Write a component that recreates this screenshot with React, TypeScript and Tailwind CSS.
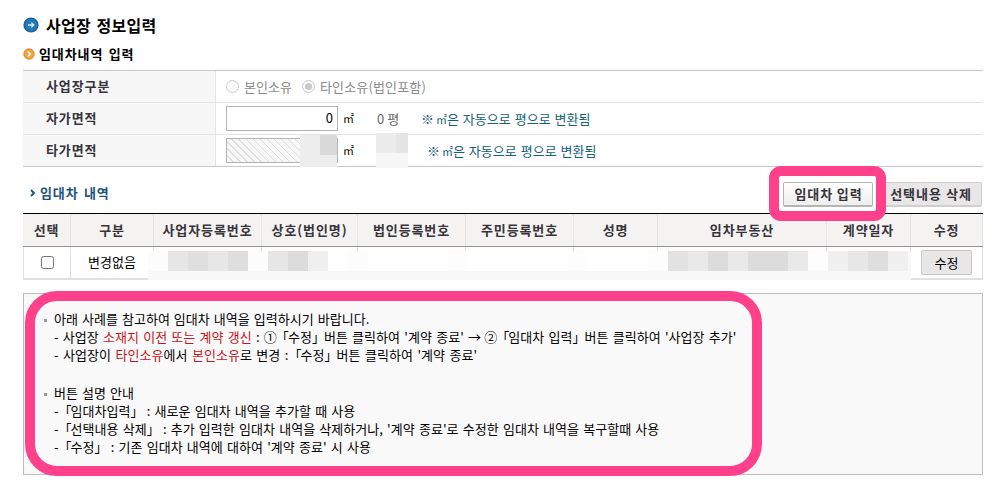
import type { ReactNode } from 'react';

interface Column {
  label: string;
  width: string;
}

const columns: Column[] = [
  { label: '선택', width: 'w-[48px]' },
  { label: '구분', width: 'w-[83px]' },
  { label: '사업자등록번호', width: 'w-[108px]' },
  { label: '상호(법인명)', width: 'w-[96px]' },
  { label: '법인등록번호', width: 'w-[108px]' },
  { label: '주민등록번호', width: 'w-[108px]' },
  { label: '성명', width: 'w-[84px]' },
  { label: '임차부동산', width: 'w-[169px]' },
  { label: '계약일자', width: 'w-[84px]' },
  { label: '수정', width: 'w-[72px]' },
];

// masked values in the list row, one entry per 20px block
const maskBlocks = [
  '#fcfcfc', '#e6e6e6', '#dfdfdf', '#e7e7e7', '#dedede', '#fcfcfc', '#e6e6e6', '#dcdcdc', '#efefef', '#fefefe',
  '#fcfcfc', '#ffffff', '#ffffff', '#ffffff', '#ffffff', '#fdfdfd', '#ffffff', '#ffffff', '#ffffff', '#ffffff',
  '#ffffff', '#fdfdfd', '#ffffff', '#ffffff', '#ffffff', '#fdfdfd', '#e2e2e2', '#e9e9e9', '#dcdcdc', '#e9e9e9',
  '#dcdcdc', '#dcdcdc', '#e9e9e9', '#fdfdfd', '#f0f0f0', '#e7e7e7', '#dedede', '#f0f0f0',
];

const Radio = ({ checked }: { checked?: boolean }) => (
  <span className="flex h-[13px] w-[13px] items-center justify-center rounded-full border border-[#cbcbcb] bg-[#fafafa]">
    {checked && <span className="h-[7px] w-[7px] rounded-full bg-[#c9c9c9]" />}
  </span>
);

const FormRow = ({ label, children }: { label: string; children: ReactNode }) => (
  <div className="flex h-8 border-b border-[#e4e4e4] last:border-[#c8c8c8]">
    <div className="w-[193px] border-r border-[#e4e4e4] bg-[#f7f7f7] pl-[23px] font-bold leading-[30px] tracking-[0.9px] text-[#38333b]">
      {label}
    </div>
    <div className="relative flex flex-1 items-center pl-[10px]">{children}</div>
  </div>
);

const AreaHint = () => (
  <span className="text-[#15607a] [word-spacing:0.9px]">
    <span className="tracking-[-2px]">※</span> <span className="text-[11px]">㎡</span>은 자동으로 평으로 변환됨
  </span>
);

const Line = ({ bullet, children }: { bullet?: boolean; children: ReactNode }) => (
  <p className={bullet ? 'flex h-[18px] items-center [word-spacing:1px]' : 'h-[18px] whitespace-nowrap pl-[10px]'}>
    {bullet && <span className="mr-[7px] mt-[2px] h-[3px] w-[3px] bg-[#999]" />}
    {children}
  </p>
);

const Red = ({ children }: { children: ReactNode }) => <span className="text-[#c4161c]">{children}</span>;

const Tight = ({ children }: { children: string }) => <span className="tracking-[-1px]">{children}</span>;

// full-width brackets set a little tighter than the em box
const Q = ({ children }: { children: string }) => (
  <>
    <Tight>「</Tight>
    {children}
    <Tight>」</Tight>
  </>
);

export default function App() {
  return (
    <main className="relative h-[491px] w-[1001px] overflow-hidden bg-white pl-[23px] pt-[14px] font-['Noto_Sans_CJK_KR',sans-serif] text-[13px] tracking-[0.04px] text-black [word-spacing:1.5px]">
      <h1 className="flex h-[22px] items-center text-[16px] font-bold leading-[22px] tracking-[0.3px]">
        <svg className="mr-[7px]" width="16" height="16" viewBox="0 0 16 16">
          <circle cx="8" cy="8" r="7.6" fill="#1b5f96" />
          <circle cx="8" cy="8" r="6.2" fill="#2478b4" />
          <path d="M5 8h5.5M8.3 5.6 10.8 8l-2.5 2.4" fill="none" stroke="#d9efff" strokeWidth="1.3" />
        </svg>
        사업장 정보입력
      </h1>
      <h2 className="mt-2 flex h-5 items-center font-bold leading-5 tracking-[0.9px]">
        <svg className="mb-px mr-1" width="12" height="12" viewBox="0 0 12 12">
          <circle cx="6" cy="6" r="5.7" fill="#e08f2b" />
          <circle cx="6" cy="6" r="4.6" fill="#eda547" />
          <path d="M4.8 3.5 7.3 6 4.8 8.5" fill="none" stroke="#fff6dc" strokeWidth="1.6" />
        </svg>
        임대차내역 입력
      </h2>

      <section className="mt-[6px] w-[960px] border-t border-[#c8c8c8]">
        <FormRow label="사업장구분">
          <div className="flex items-center text-[#8a8a8a]">
            <Radio />
            <span className="ml-[5px] w-[58px] leading-[30px]">본인소유</span>
            <Radio checked />
            <span className="ml-[5px] leading-[30px] tracking-[0.15px]">타인소유(법인포함)</span>
          </div>
        </FormRow>
        <FormRow label="자가면적">
          <div className="h-[25px] w-[112px] border border-[#b4b4b4] bg-white pr-1 text-right leading-[22px]">0</div>
          <span className="ml-[5px] w-[34px] text-[11px]">㎡</span>
          <span className="w-[44px] text-[#666] [word-spacing:0px]">0 평</span>
          <AreaHint />
        </FormRow>
        <FormRow label="타가면적">
          <div className="h-[25px] w-[112px] border border-[#b4b4b4] bg-[repeating-linear-gradient(45deg,#f7f7f7_0px,#f7f7f7_4px,#dedede_4px,#dedede_5px)]" />
          <span className="ml-[5px] w-[84px] text-[11px]">㎡</span>
          <AreaHint />
          <div className="absolute left-[84px] top-0 flex h-8 w-[37px] justify-end bg-[#ededed]">
            <div className="h-5 w-[17px] bg-[#d9d9d9]" />
          </div>
          <div className="absolute -top-[2px] left-[160px] h-[35px] w-8 bg-[#f6f6f6]">
            <div className="flex h-5 bg-[#ececec]">
              <div className="ml-5 w-3 bg-[#e5e5e5]" />
            </div>
          </div>
        </FormRow>
      </section>

      <div className="flex h-[46px] w-[959px] items-start justify-between pt-[15px]">
        <h3 className="flex items-center pl-[7px] font-bold leading-[22px] tracking-[0.9px] text-[#1d547f]">
          <svg className="mr-1" width="6" height="8" viewBox="0 0 6 8">
            <path d="M1 1l3 3-3 3" fill="none" stroke="#1d547f" strokeWidth="2" />
          </svg>
          임대차 내역
        </h3>
        <div className="flex font-bold leading-[22px] tracking-[0.9px] text-[#38333b]">
          <div className="relative mr-[5px]">
            <button className="h-[25px] w-[90px] rounded-[2px] border border-b-2 border-[#b5b5b5] bg-linear-to-b from-white to-[#eeeeee] pl-px">
              임대차 입력
            </button>
            <div className="absolute -left-[14px] -top-4 z-10 h-[55px] w-[117px] rounded-[12px] border-[10px] border-[#ff418c]" />
          </div>
          <button className="h-[25px] w-[104px] whitespace-nowrap rounded-[2px] border border-b-2 border-[#cfcfcf] bg-[#e8e6e7] pl-[2px] leading-[20px] tracking-[1px]">
            선택내용 삭제
          </button>
        </div>
      </div>

      <section className="relative w-[960px]">
        <div className="flex h-[34px] border-b border-t border-b-[#949494] border-t-black bg-[#f4f3f2] font-bold leading-[32px] tracking-[0.9px] text-[#38333b]">
          {columns.map((c) => (
            <div key={c.label} className={`${c.width} shrink-0 whitespace-nowrap border-r border-[#e4e4e4] text-center`}>
              {c.label}
            </div>
          ))}
        </div>
        <div className="flex h-[33px] border-b-2 border-l border-[#e0e0e0] leading-[30px]">
          <div className="flex w-[47px] items-center justify-center border-r border-[#e0e0e0]">
            <span className="h-[13px] w-[13px] rounded-[2.5px] border border-[#767676] bg-white" />
          </div>
          <div className="w-[83px] border-r border-[#e0e0e0] text-center">변경없음</div>
          <div className="flex flex-1">
            {columns.slice(2, 9).map((c) => (
              <div key={c.label} className={`${c.width} h-1 shrink-0 border-r border-[#e0e0e0]`} />
            ))}
          </div>
          <div className="flex w-[72px] items-center justify-center border-r border-[#e0e0e0]">
            <button className="h-[25px] w-[51px] rounded-[2px] border border-[#c8c8c8] bg-[#e8e6e7] leading-[22px]">수정</button>
          </div>
        </div>
        <div className="absolute left-[125px] top-[38px] h-[29px] w-[763px] bg-[#f8f8f8]">
          <div className="flex h-5">
            {maskBlocks.map((color, i) => (
              <div key={i} className="w-5" style={{ backgroundColor: color }} />
            ))}
          </div>
        </div>
      </section>

      <section className="relative mt-[13px] h-[182px] w-[960px] border border-[#bdbdbd] bg-[#f9f9f9] pl-5 pt-4 leading-[18px]">
        <Line bullet>아래 사례를 참고하여 임대차 내역을 입력하시기 바랍니다.</Line>
        <div className="[word-spacing:1.25px]">
          <Line>
            - 사업장 <Red>소재지 이전 또는 계약 갱신</Red> : <Tight>①</Tight>
            <Q>수정</Q>버튼 클릭하여 '계약 종료' <Tight>→</Tight> <Tight>②</Tight>
            <Q>임대차 입력</Q>버튼 클릭하여 '사업장 추가'
          </Line>
        </div>
        <Line>
          - 사업장이 <Red>타인소유</Red>에서 <Red>본인소유</Red>로 변경 :<Q>수정</Q>버튼 클릭하여 '계약 종료'
        </Line>
        <div className="mt-5 [word-spacing:1.2px]">
          <Line bullet>버튼 설명 안내</Line>
          <Line>
            -<Q>임대차입력</Q> : 새로운 임대차 내역을 추가할 때 사용
          </Line>
          <Line>
            -<Q>선택내용 삭제</Q> : 추가 입력한 임대차 내역을 삭제하거나, '계약 종료'로 수정한 임대차 내역을 복구할때 사용
          </Line>
          <Line>
            -<Q>수정</Q> : 기존 임대차 내역에 대하여 '계약 종료' 시 사용
          </Line>
        </div>
        <div className="absolute -top-[3px] left-[1px] h-[185px] w-[737px] rounded-[32px] border-[10px] border-[#ff418c]" />
      </section>
    </main>
  );
}
